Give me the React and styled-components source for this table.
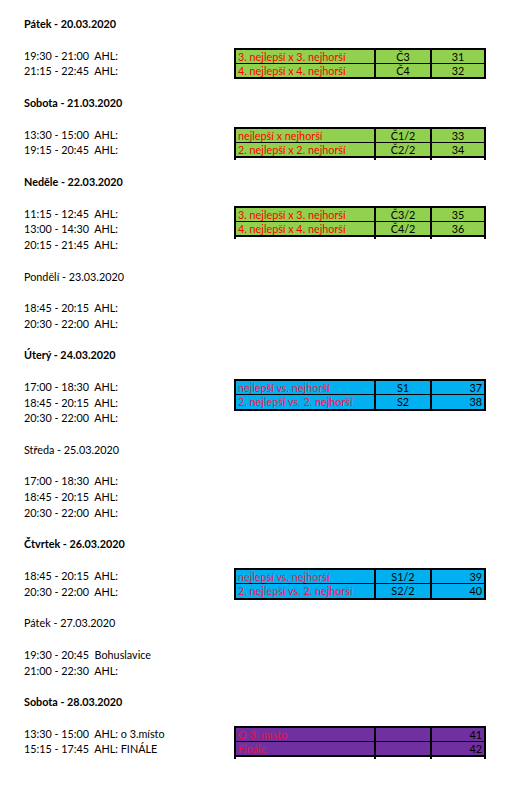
import React from "react";
import styled, { createGlobalStyle } from "styled-components";

const ROW = 15.76;

const GlobalStyle = createGlobalStyle`
  html, body {
    margin: 0;
    padding: 0;
    background: #ffffff;
  }
  body {
    font-family: "Lato", "Liberation Sans", sans-serif;
    color: #000;
  }
`;

const Page = styled.div`
  width: 527px;
  min-height: 812px;
  padding: 16px 0 0 24px;
  box-sizing: border-box;
  display: flex;
  flex-direction: column;
`;

const Day = styled.section`
  display: flex;
  flex-direction: column;
  margin-bottom: ${ROW}px;
`;

const Header = styled.div`
  height: ${ROW}px;
  line-height: ${ROW}px;
  font-size: 10.8px;
  font-weight: ${(p) => (p.$bold ? 700 : 400)};
  white-space: pre;
  margin-bottom: ${ROW}px;
`;

const Block = styled.div`
  display: flex;
  align-items: flex-start;
`;

const Times = styled.div`
  width: 210px;
  display: flex;
  flex-direction: column;
`;

const Time = styled.div`
  height: ${ROW}px;
  line-height: ${ROW}px;
  font-size: 10.8px;
  white-space: pre;
`;

const palette = {
  green: { bg: "#92d050", label: "#ff0000" },
  blue: { bg: "#00b0f0", label: "#f5164f" },
  purple: { bg: "#7030a0", label: "#ec1040" },
};

const Table = styled.div`
  display: grid;
  grid-template-columns: 138px 54px 52px;
  grid-template-rows: 13.26px 13.26px ${(p) => (p.$tail ? "2px" : "")};
  column-gap: 2px;
  row-gap: 1.26px;
  padding: 2px 2px ${(p) => (p.$tail ? 0 : 2)}px 2px;
  margin-bottom: ${(p) => (p.$tail ? -1.26 : 0)}px;
  background: #000;
  font-size: 10.8px;
`;

const Cell = styled.div`
  background: ${(p) => palette[p.$tone].bg};
  color: ${(p) => (p.$label ? palette[p.$tone].label : "#000")};
  text-align: ${(p) => p.$align || "left"};
  line-height: 13.26px;
  padding: 0 2px;
  white-space: nowrap;
  overflow: hidden;
`;

const Stub = styled.div`
  background: #fff;
`;

const days = [
  {
    title: "Pátek - 20.03.2020",
    bold: true,
    times: ["19:30 - 21:00  AHL:", "21:15 - 22:45  AHL:"],
    tone: "green",
    num: "center",
    games: [
      ["3. nejlepší x 3. nejhorší", "Č3", "31"],
      ["4. nejlepší x 4. nejhorší", "Č4", "32"],
    ],
  },
  {
    title: "Sobota - 21.03.2020",
    bold: true,
    times: ["13:30 - 15:00  AHL:", "19:15 - 20:45  AHL:"],
    tone: "green",
    num: "center",
    tail: true,
    games: [
      ["nejlepší x nejhorší", "Č1/2", "33"],
      ["2. nejlepší x 2. nejhorší", "Č2/2", "34"],
    ],
  },
  {
    title: "Neděle - 22.03.2020",
    bold: true,
    times: ["11:15 - 12:45  AHL:", "13:00 - 14:30  AHL:", "20:15 - 21:45  AHL:"],
    tone: "green",
    num: "center",
    tail: true,
    games: [
      ["3. nejlepší x 3. nejhorší", "Č3/2", "35"],
      ["4. nejlepší x 4. nejhorší", "Č4/2", "36"],
    ],
  },
  {
    title: "Pondělí - 23.03.2020",
    times: ["18:45 - 20:15  AHL:", "20:30 - 22:00  AHL:"],
  },
  {
    title: "Úterý - 24.03.2020",
    bold: true,
    times: ["17:00 - 18:30  AHL:", "18:45 - 20:15  AHL:", "20:30 - 22:00  AHL:"],
    tone: "blue",
    num: "right",
    games: [
      ["nejlepší vs. nejhorší", "S1", "37"],
      ["2. nejlepší vs. 2. nejhorší", "S2", "38"],
    ],
  },
  {
    title: "Středa - 25.03.2020",
    times: ["17:00 - 18:30  AHL:", "18:45 - 20:15  AHL:", "20:30 - 22:00  AHL:"],
  },
  {
    title: "Čtvrtek - 26.03.2020",
    bold: true,
    times: ["18:45 - 20:15  AHL:", "20:30 - 22:00  AHL:"],
    tone: "blue",
    num: "right",
    games: [
      ["nejlepší vs. nejhorší", "S1/2", "39"],
      ["2. nejlepší vs. 2. nejhorší", "S2/2", "40"],
    ],
  },
  {
    title: "Pátek - 27.03.2020",
    times: ["19:30 - 20:45  Bohuslavice", "21:00 - 22:30  AHL:"],
  },
  {
    title: "Sobota - 28.03.2020",
    bold: true,
    times: ["13:30 - 15:00  AHL: o 3.místo", "15:15 - 17:45  AHL: FINÁLE"],
    tone: "purple",
    num: "right",
    tail: true,
    games: [
      ["O 3. místo", "", "41"],
      ["Finále", "", "42"],
    ],
  },
];

const App = () => {
  return (
    <>
      <GlobalStyle />
      <Page>
        {days.map((day) => (
          <Day key={day.title}>
            <Header $bold={day.bold}>{day.title}</Header>
            <Block>
              <Times>
                {day.times.map((t) => (
                  <Time key={t}>{t}</Time>
                ))}
              </Times>
              {day.games && (
                <Table $tail={day.tail}>
                  {day.games.map(([label, code, n]) => (
                    <React.Fragment key={n}>
                      <Cell $tone={day.tone} $label>
                        {label}
                      </Cell>
                      <Cell $tone={day.tone} $align="center">
                        {code}
                      </Cell>
                      <Cell $tone={day.tone} $align={day.num}>
                        {n}
                      </Cell>
                    </React.Fragment>
                  ))}
                  {day.tail && (
                    <>
                      <Stub />
                      <Stub />
                      <Stub />
                    </>
                  )}
                </Table>
              )}
            </Block>
          </Day>
        ))}
      </Page>
    </>
  );
};

export default App;
